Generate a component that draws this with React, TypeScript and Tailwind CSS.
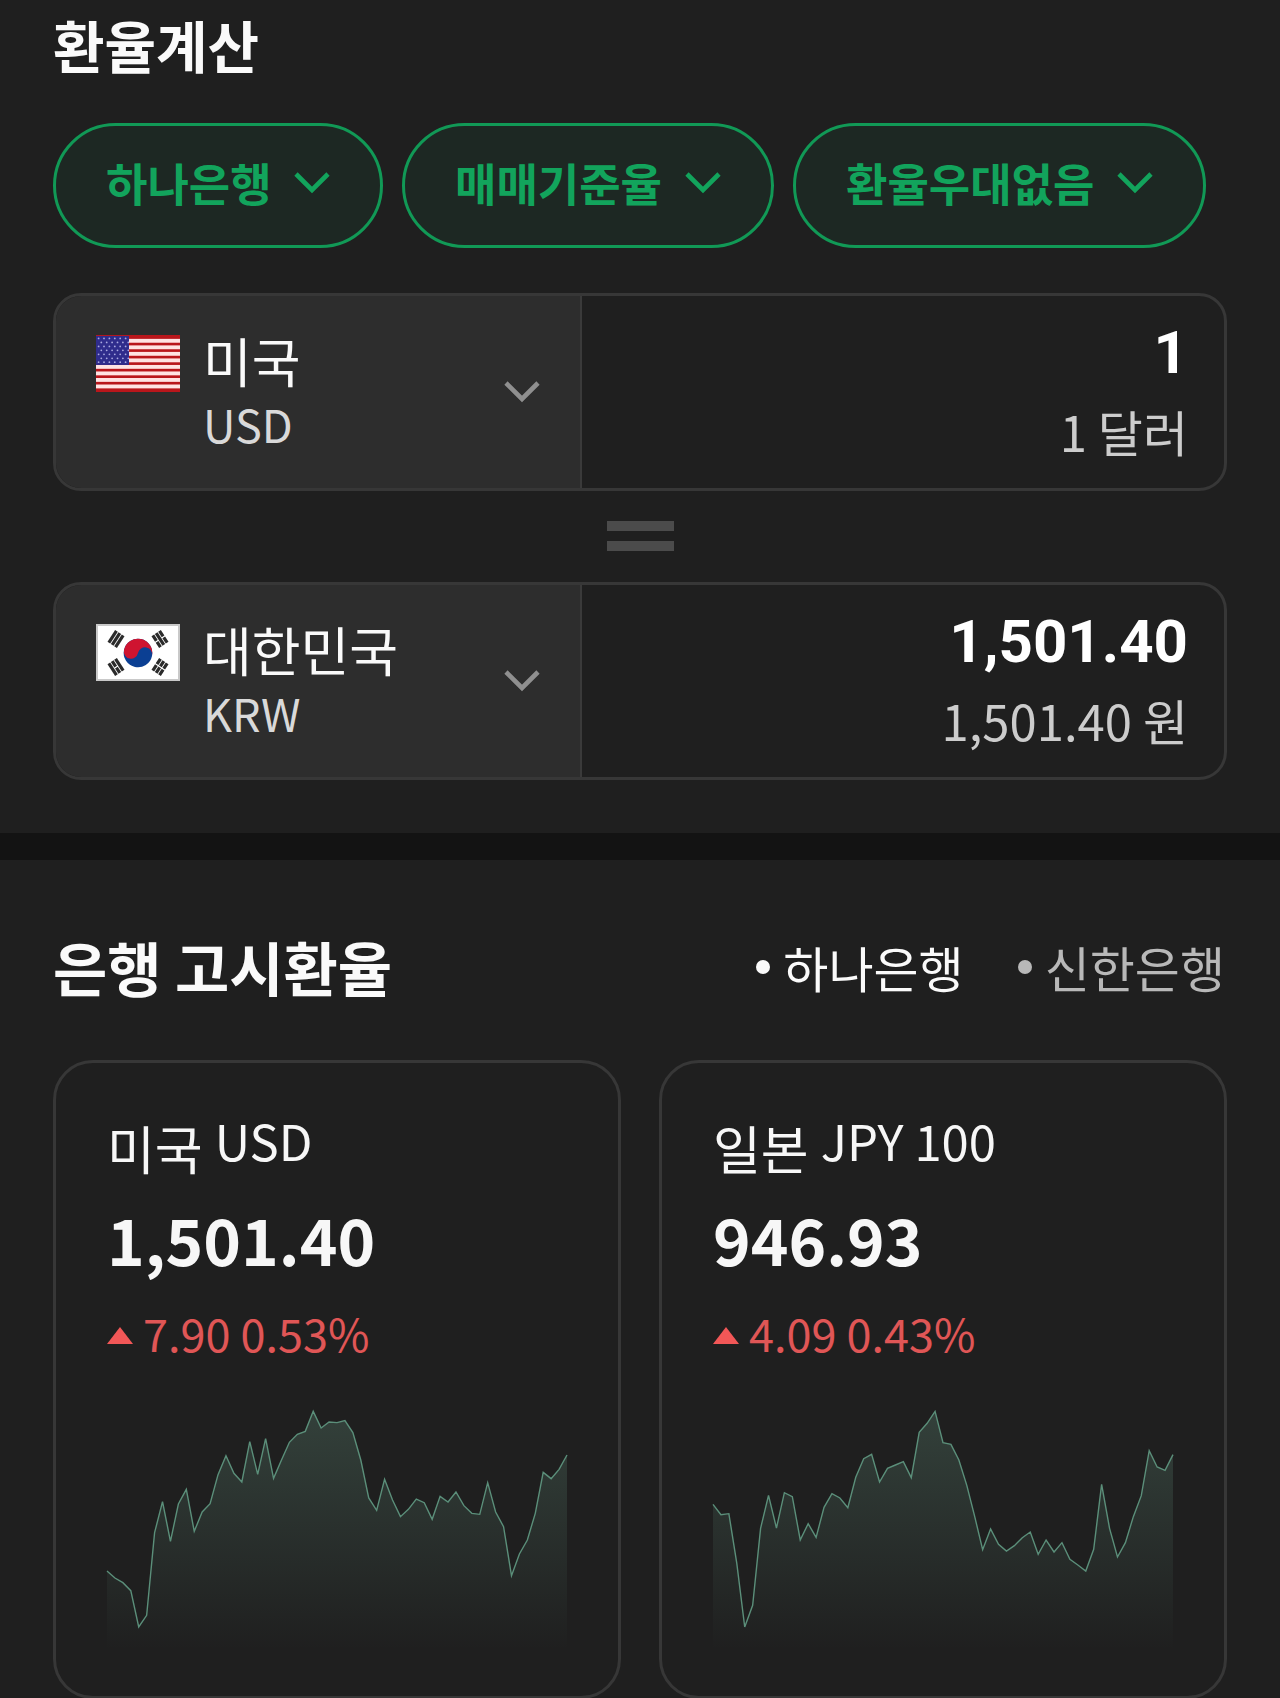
import { useId, useState } from "react";

const GREEN = "#12a45c";

const FILTERS = [
  { label: "은행 선택", value: "하나은행" },
  { label: "환율 기준", value: "매매기준율" },
  { label: "환율 우대", value: "환율우대없음" },
];

const BANKS = ["하나은행", "신한은행"];

// Chart heights, measured down from the top of a 720 unit tall plot.
const RATES = [
  {
    name: "미국",
    code: "USD",
    price: "1,501.40",
    change: "7.90",
    percent: "0.53%",
    points: [
      483, 504, 518, 542, 651, 616, 368, 275, 394, 282, 238, 364, 306, 281, 194, 137, 190, 216, 95, 193,
      86, 205, 150, 97, 73, 64, 4, 54, 36, 38, 32, 68, 150, 264, 301, 208, 270, 320, 298, 267,
      278, 328, 259, 276, 246, 287, 310, 313, 218, 306, 350, 497, 432, 390, 310, 187, 206, 178, 135,
    ],
  },
  {
    name: "일본",
    code: "JPY 100",
    price: "946.93",
    change: "4.09",
    percent: "0.43%",
    points: [
      283, 314, 311, 460, 651, 586, 355, 256, 354, 248, 260, 390, 341, 382, 292, 251, 264, 293, 202, 146,
      133, 216, 175, 165, 155, 203, 67, 40, 4, 98, 103, 150, 226, 320, 419, 357, 403, 423, 407, 383,
      366, 433, 390, 426, 398, 448, 465, 483, 418, 223, 355, 441, 398, 320, 257, 122, 171, 181, 134,
    ],
  },
];

function Chevron({ color }: { color: string }) {
  return (
    <svg width="36" height="22" viewBox="0 0 36 22" fill="none" aria-hidden="true">
      <path d="M2 2l16 16L34 2" stroke={color} strokeWidth="4.6" />
    </svg>
  );
}

function FlagUS() {
  return (
    <svg width="84" height="57" viewBox="0 0 84 59" preserveAspectRatio="none" aria-hidden="true">
      <rect width="84" height="59" fill="#b9161b" />
      {[0, 1, 2, 3, 4, 5, 6, 7].map((i) => (
        <rect key={i} y={4 + i * 6.75} width="84" height="4" fill="#ffe3e3" />
      ))}
      <rect y="1" width="33" height="30" fill="#2f2c8c" />
      {[0, 1, 2, 3, 4, 5, 6].map((r) =>
        [0, 1, 2, 3, 4, 5].map((c) => (
          <circle key={`${r}-${c}`} cx={2.6 + c * 5.4 + (r % 2) * 2.7} cy={3.6 + r * 4.1} r="0.9" fill="#a9a8e0" />
        )),
      )}
    </svg>
  );
}

function Trigram({ x, y, angle, broken }: { x: number; y: number; angle: number; broken: boolean[] }) {
  return (
    <g transform={`translate(${x} ${y}) rotate(${angle})`} stroke="#2b2b2b" strokeWidth="3.2">
      {broken.map((b, i) => (
        <path key={i} d={b ? `M-7 ${i * 4 - 4}h6.5M.7 ${i * 4 - 4}h6.3` : `M-7 ${i * 4 - 4}h14`} />
      ))}
    </g>
  );
}

function FlagKR() {
  return (
    <svg width="84" height="57" viewBox="0 0 84 57" aria-hidden="true">
      <rect x="1" y="1" width="82" height="55" fill="#fff" stroke="#c9c9c9" strokeWidth="2" />
      <g transform="translate(42 29) rotate(12)">
        <circle r="14.3" fill="#0b3f93" />
        <path d="M-14.3 0a14.3 14.3 0 0 1 28.6 0a7.15 7.15 0 0 0-14.3 0a7.15 7.15 0 0 1-14.3 0z" fill="#cf1430" />
      </g>
      <Trigram x={20} y={15} angle={-57} broken={[false, false, false]} />
      <Trigram x={64} y={15} angle={57} broken={[true, false, true]} />
      <Trigram x={20} y={43} angle={57} broken={[false, true, false]} />
      <Trigram x={64} y={43} angle={-57} broken={[true, true, true]} />
    </svg>
  );
}

function FilterPill({ label, value }: { label: string; value: string }) {
  return (
    <div className="relative">
      <select
        aria-label={label}
        className="appearance-none h-[125px] pl-[50px] pr-[108px] pb-[6px] rounded-full border-3 border-[#119956] bg-[#1d2823] text-[45px] font-bold text-[#12a45c]"
      >
        <option>{value}</option>
      </select>
      <span className="absolute right-[53px] inset-y-0 pb-[6px] flex items-center pointer-events-none">
        <Chevron color={GREEN} />
      </span>
    </div>
  );
}

type CurrencyRowProps = {
  flag: React.ReactNode;
  name: string;
  code: string;
  amount: string;
  caption: string;
};

function CurrencyRow({ flag, name, code, amount, caption }: CurrencyRowProps) {
  const id = useId();
  const [value, setValue] = useState(amount);

  return (
    <div className="flex h-[198px] rounded-[28px] border-3 border-[#373737] overflow-hidden">
      <div className="w-[45%] flex items-center px-10 bg-[#2d2d2d] border-r-2 border-[#3a3a3a]">
        <div className="flex-1 min-w-0 flex items-start gap-[23px]">
          <span className="shrink-0 mt-[7px]">{flag}</span>
          <div className="flex-1 min-w-0">
            <select aria-label="통화" className="appearance-none block w-full h-16 text-[53px] leading-[64px] text-[#fafafa]">
              <option>{name}</option>
            </select>
            <label htmlFor={id} className="block text-[45px] leading-[64px] text-[#d9d9d9]">{code}</label>
          </div>
        </div>
        <Chevron color="#8f8f8f" />
      </div>
      <div className="flex-1 min-w-0 flex flex-col justify-center pr-9 text-right">
        <input
          id={id}
          value={value}
          onChange={(e) => setValue(e.target.value)}
          className="w-full h-[78px] bg-transparent text-right font-['Roboto'] text-[60px] font-bold text-white outline-none"
        />
        <p className="text-[49px] leading-[78px] text-[#cccccc]">{caption}</p>
      </div>
    </div>
  );
}

function RateChart({ points }: { points: number[] }) {
  const id = useId();
  const line = points.map((y, i) => `${i * 10},${y}`).join(" ");

  return (
    <svg className="block w-full h-60 overflow-visible" viewBox="0 0 580 720" preserveAspectRatio="none" aria-hidden="true">
      <defs>
        <linearGradient id={id} x1="0" y1="0" x2="0" y2="720" gradientUnits="userSpaceOnUse">
          <stop offset="0" stopColor="#6a9c86" stopOpacity="0.27" />
          <stop offset="1" stopColor="#6a9c86" stopOpacity="0" />
        </linearGradient>
      </defs>
      <polygon points={`0,720 ${line} 580,720`} fill={`url(#${id})`} />
      <polyline points={line} fill="none" stroke="#5b8f7a" strokeWidth="1.4" vectorEffect="non-scaling-stroke" />
    </svg>
  );
}

function RateCard({ name, code, price, change, percent, points }: (typeof RATES)[number]) {
  return (
    <a href="#" className="block rounded-[40px] border-3 border-[#373737] pt-[39px] pb-[46px] px-[51px]">
      <h3 className="flex items-end gap-3 text-[#f7f7f7]">
        <span className="text-[52px] leading-[60px]">{name}</span>
        <span className="text-[49px] leading-[76px]">{code}</span>
      </h3>
      <p className="mt-3 text-[64px] leading-[96px] font-bold text-[#f7f7f7]">{price}</p>
      <p className="mt-[15px] flex items-center gap-[10px] text-[45px] leading-[64px] text-[#e05656]">
        <svg className="mt-1" width="26" height="17" viewBox="0 0 26 17" aria-hidden="true">
          <path d="M13 0l13 17H0z" fill="#f25757" />
        </svg>
        <span>{change} {percent}</span>
      </p>
      <div className="mt-[45px]">
        <RateChart points={points} />
      </div>
    </a>
  );
}

export default function App() {
  const [bank, setBank] = useState(BANKS[0]);

  return (
    <main className="min-h-screen bg-[#1f1f1f] text-[#fafafa] font-['Noto_Sans_CJK_KR',sans-serif]">
      {/* Calculator */}
      <section className="px-[53px] pt-1 pb-[53px]">
        <h2 className="text-[56px] leading-[80px] font-bold">환율계산</h2>
        <div className="mt-[39px] flex gap-[19px]">
          {FILTERS.map((f) => (
            <FilterPill key={f.value} {...f} />
          ))}
        </div>
        <div className="mt-[45px]">
          <CurrencyRow flag={<FlagUS />} name="미국" code="USD" amount="1" caption="1 달러" />
          <div className="flex flex-col items-center gap-[10px] pt-[30px] pb-[31px]">
            <span className="w-[67px] h-[10px] bg-[#4b4b4b]" />
            <span className="w-[67px] h-[10px] bg-[#4b4b4b]" />
          </div>
          <CurrencyRow flag={<FlagKR />} name="대한민국" code="KRW" amount="1,501.40" caption="1,501.40 원" />
        </div>
      </section>

      <div className="h-[27px] bg-[#131313]" />

      {/* Bank rates */}
      <section className="px-[53px] pt-[67px]">
        <div className="flex items-center justify-between">
          <h2 className="text-[59px] leading-[80px] font-bold">은행 고시환율</h2>
          <div className="flex gap-[54px] pr-[2px]">
            {BANKS.map((b) => (
              <button
                key={b}
                onClick={() => setBank(b)}
                className={`flex items-center gap-[13px] text-[49px] leading-[80px] ${b === bank ? "text-[#fafafa]" : "text-[#b8b8b8]"}`}
              >
                <span className="size-[14px] rounded-full bg-current" />
                {b}
              </button>
            ))}
          </div>
        </div>
        <div className="mt-[53px] grid grid-cols-2 gap-[38px]">
          {RATES.map((r) => (
            <RateCard key={r.code} {...r} />
          ))}
        </div>
      </section>
    </main>
  );
}
